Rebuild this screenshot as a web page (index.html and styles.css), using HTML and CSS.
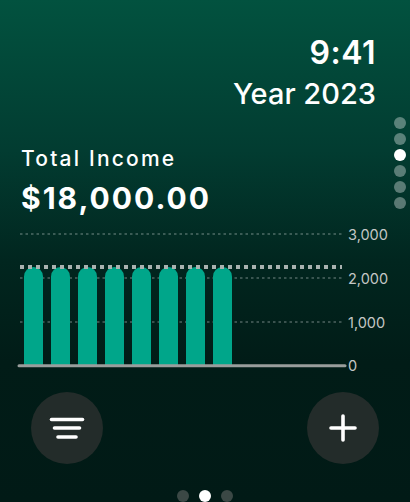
FILE: index.html
```html
<!DOCTYPE html>
<html lang="en">
<head>
  <meta charset="UTF-8">
  <meta name="viewport" content="width=device-width, initial-scale=1.0">
  <title>Total Income</title>
  <link rel="stylesheet" href="styles.css">
</head>
<body>
  <div class="screen">
    <div class="header">
      <div class="time">9:41</div>
      <div class="year">Year 2023</div>
    </div>

    <!-- vertical page indicator -->
    <div class="side-dots">
      <span class="dot"></span>
      <span class="dot"></span>
      <span class="dot active"></span>
      <span class="dot"></span>
      <span class="dot"></span>
      <span class="dot"></span>
    </div>

    <div class="summary">
      <div class="summary-label">Total Income</div>
      <div class="summary-value">$18,000.00</div>
    </div>

    <svg class="chart" width="410" height="160" viewBox="0 0 410 160">
      <g class="grid">
        <line x1="20" y1="14" x2="342" y2="14" />
        <line x1="20" y1="58" x2="342" y2="58" />
        <line x1="20" y1="102" x2="342" y2="102" />
      </g>
      <g class="bars">
        <path d="M24 146 V56.5 a9.5 9.5 0 0 1 19 0 V146 Z" />
        <path d="M51 146 V56.5 a9.5 9.5 0 0 1 19 0 V146 Z" />
        <path d="M78 146 V56.5 a9.5 9.5 0 0 1 19 0 V146 Z" />
        <path d="M105 146 V56.5 a9.5 9.5 0 0 1 19 0 V146 Z" />
        <path d="M132 146 V56.5 a9.5 9.5 0 0 1 19 0 V146 Z" />
        <path d="M159 146 V56.5 a9.5 9.5 0 0 1 19 0 V146 Z" />
        <path d="M186 146 V56.5 a9.5 9.5 0 0 1 19 0 V146 Z" />
        <path d="M213 146 V56.5 a9.5 9.5 0 0 1 19 0 V146 Z" />
      </g>
      <line class="average" x1="20" y1="47" x2="342" y2="47" />
      <line class="baseline" x1="19" y1="145.7" x2="345" y2="145.7" />
      <g class="axis">
        <text x="348" y="19.5">3,000</text>
        <text x="348" y="63.5">2,000</text>
        <text x="348" y="107.5">1,000</text>
        <text x="348" y="151">0</text>
      </g>
    </svg>

    <div class="actions">
      <button class="round-btn" aria-label="Filter">
        <svg width="40" height="30" viewBox="0 0 40 30">
          <line x1="4.5" y1="6.5" x2="35.5" y2="6.5" />
          <line x1="7.5" y1="15" x2="32.5" y2="15" />
          <line x1="11" y1="24" x2="29" y2="24" />
        </svg>
      </button>
      <button class="round-btn" aria-label="Add">
        <svg width="30" height="30" viewBox="0 0 30 30">
          <line x1="3" y1="15" x2="27" y2="15" />
          <line x1="15" y1="3" x2="15" y2="27" />
        </svg>
      </button>
    </div>

    <div class="page-dots">
      <span class="dot"></span>
      <span class="dot active"></span>
      <span class="dot"></span>
    </div>
  </div>
</body>
</html>
```

FILE: styles.css
```css
* {
  margin: 0;
  padding: 0;
  box-sizing: border-box;
}

body {
  font-family: Inter, 'Noto Sans', sans-serif;
  background: #011a16;
  color: white;
}

.screen {
  position: relative;
  width: 410px;
  height: 502px;
  overflow: hidden;
  padding-top: 37px;
  background: linear-gradient(180deg, #02523f 0%, #023c31 30%, #01261f 52%, #011c17 72%, #011a16 100%);
  display: flex;
  flex-direction: column;
}

.header {
  display: flex;
  flex-direction: column;
  align-items: flex-end;
  padding-right: 34px;
  line-height: 1;
}

.time {
  font-size: 32px;
  font-weight: 600;
  letter-spacing: 0.5px;
}

.year {
  margin-top: 10px;
  font-size: 29px;
  font-weight: 500;
}

.side-dots {
  position: absolute;
  top: 117px;
  right: 4px;
  display: flex;
  flex-direction: column;
  gap: 4px;
}

.side-dots .dot {
  width: 12px;
  height: 12px;
  border-radius: 50%;
  background: rgba(255, 255, 255, 0.35);
}

.side-dots .dot.active {
  background: white;
}

.summary {
  margin-top: 40px;
  padding-left: 21px;
  line-height: 1;
}

.summary-label {
  font-size: 21px;
  font-weight: 500;
  letter-spacing: 2.2px;
}

.summary-value {
  margin-top: 14px;
  font-size: 30px;
  font-weight: 700;
  letter-spacing: 2px;
}

.chart {
  display: block;
  margin-top: 7px;
}

.grid line {
  stroke: rgba(255, 255, 255, 0.3);
  stroke-width: 1.5;
  stroke-dasharray: 2.5 3;
}

.bars path {
  fill: #00a68a;
}

.average {
  stroke: #a9b2b0;
  stroke-width: 4;
  stroke-dasharray: 4 4;
}

.baseline {
  stroke: #999d9c;
  stroke-width: 3;
  stroke-linecap: round;
}

.axis text {
  font-family: Inter, 'Noto Sans', sans-serif;
  font-size: 14.5px;
  fill: #c4c7c6;
}

.actions {
  margin-top: 12px;
  display: flex;
  justify-content: space-between;
  padding: 0 31px;
}

.round-btn {
  width: 72px;
  height: 72px;
  border: none;
  border-radius: 50%;
  background: #232c2a;
  display: flex;
  align-items: center;
  justify-content: center;
}

.round-btn svg line {
  stroke: white;
  stroke-width: 3.6;
  stroke-linecap: round;
}

.page-dots {
  margin-top: 26px;
  display: flex;
  justify-content: center;
  gap: 10px;
}

.page-dots .dot {
  width: 12px;
  height: 12px;
  border-radius: 50%;
  background: #3b4845;
}

.page-dots .dot.active {
  background: white;
}
```
